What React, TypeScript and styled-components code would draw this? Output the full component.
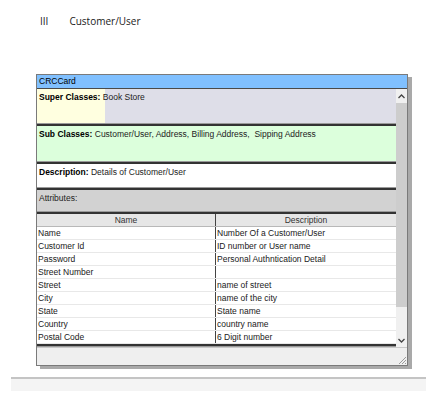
import React from "react";
import styled, { createGlobalStyle } from "styled-components";

const GlobalStyle = createGlobalStyle`
  html, body { margin: 0; padding: 0; background: #ffffff; }
  body { font-family: "Liberation Sans", Arial, sans-serif; }
`;

const Page = styled.div`
  width: 444px;
  height: 405px;
  padding-top: 14px;
  box-sizing: border-box;
`;

const Heading = styled.div`
  display: flex;
  align-items: center;
  gap: 21px;
  padding-left: 40px;
  height: 14px;
  font-family: "Open Sans", "Noto Sans", sans-serif;
  font-size: 10px;
  color: #1a1a1a;
`;

const Window = styled.div`
  margin: 46px 0 0 36px;
  width: 370px;
  border: 1px solid #7a7a7a;
  box-shadow: 4px 3px 0 #a9a9a9;
  background: #ffffff;
  font-size: 8.5px;
  color: #000;
`;

const TitleBar = styled.div`
  height: 13px;
  line-height: 13px;
  padding-left: 2px;
  background: #80c0ff;
  border-bottom: 1px solid #4a4a4a;
`;

const Body = styled.div`
  display: flex;
`;

const Content = styled.div`
  flex: 1;
  display: flex;
  flex-direction: column;
`;

const Section = styled.div<{ $h: number; $bg: string }>`
  height: ${(p) => p.$h}px;
  background: ${(p) => p.$bg};
  padding: 3px 2px 0;
  box-sizing: border-box;
  border-bottom: 2px solid #333;
  box-shadow: inset 0 -1px 0 #9a9a9a;
  color: #222;
`;

const Label = styled.b`
  font-weight: bold;
  color: #000;
`;

const HeaderRow = styled.div`
  display: grid;
  grid-template-columns: 179px 1fr;
  height: 12px;
  background: #e6e6e6;
  border-bottom: 1px solid #b8b8b8;
  color: #333;
`;

const HeaderCell = styled.div<{ $last?: boolean }>`
  text-align: center;
  line-height: 12px;
  border-right: ${(p) => (p.$last ? "none" : "1px solid #444")};
`;

const Row = styled.div`
  display: grid;
  grid-template-columns: 179px 1fr;
  height: 13px;
  border-bottom: 1px solid #e8e8e8;
  box-sizing: border-box;
`;

const Cell = styled.div<{ $last?: boolean }>`
  line-height: 12px;
  padding-left: 1px;
  white-space: nowrap;
  overflow: hidden;
  color: #1a1a1a;
  border-right: ${(p) => (p.$last ? "none" : "1px solid #444")};
`;

const TableEnd = styled.div`
  height: 2px;
  background: #333;
  border-bottom: 1px solid #999;
`;

const Scrollbar = styled.div`
  width: 11px;
  display: flex;
  flex-direction: column;
  background: #f0f0f0;
`;

const ArrowBtn = styled.div`
  height: 14px;
  display: flex;
  align-items: center;
  justify-content: center;
  background: #f0f0f0;
`;

const Thumb = styled.div`
  height: 204px;
  background: #cdcdcd;
`;

const Track = styled.div`
  flex: 1;
`;

const StatusBar = styled.div`
  height: 17px;
  background: #efefef;
  border-top: 1px solid #c8c8c8;
  display: flex;
  justify-content: flex-end;
  align-items: flex-end;
`;

const Divider = styled.div`
  margin: 11px 0 0 11px;
  width: 415px;
  height: 12px;
  border-top: 2px solid #c4c4c4;
  background: #f4f4f4;
`;

const rows: [string, string][] = [
  ["Name", "Number Of a Customer/User"],
  ["Customer Id", "ID number or User name"],
  ["Password", "Personal Authntication Detail"],
  ["Street Number", ""],
  ["Street", "name of street"],
  ["City", "name of the city"],
  ["State", "State name"],
  ["Country", "country name"],
  ["Postal Code", "6 Digit number"],
];

export default function App() {
  return (
    <Page>
      <GlobalStyle />
      <Heading>
        <span>III</span>
        <span>Customer/User</span>
      </Heading>
      <Window>
        <TitleBar>CRCCard</TitleBar>
        <Body>
          <Content>
            <Section $h={37} $bg="linear-gradient(to right, #ffffe0 68px, #dedee8 68px)">
              <Label>Super Classes:</Label> Book Store
            </Section>
            <Section $h={38} $bg="#dcffdc">
              <Label>Sub Classes:</Label> Customer/User, Address, Billing Address,&nbsp; Sipping Address
            </Section>
            <Section $h={26} $bg="#ffffff">
              <Label>Description:</Label> Details of Customer/User
            </Section>
            <Section $h={24} $bg="#d2d2d2">
              Attributes:
            </Section>
            <HeaderRow>
              <HeaderCell>Name</HeaderCell>
              <HeaderCell $last>Description</HeaderCell>
            </HeaderRow>
            {rows.map(([n, d]) => (
              <Row key={n}>
                <Cell>{n}</Cell>
                <Cell $last>{d}</Cell>
              </Row>
            ))}
            <TableEnd />
          </Content>
          <Scrollbar>
            <ArrowBtn>
              <svg width="7" height="5" viewBox="0 0 7 5">
                <path d="M0.5 4 L3.5 1 L6.5 4" fill="none" stroke="#444" strokeWidth="1.3" />
              </svg>
            </ArrowBtn>
            <Thumb />
            <Track />
            <ArrowBtn>
              <svg width="7" height="5" viewBox="0 0 7 5">
                <path d="M0.5 1 L3.5 4 L6.5 1" fill="none" stroke="#444" strokeWidth="1.3" />
              </svg>
            </ArrowBtn>
          </Scrollbar>
        </Body>
        <StatusBar>
          <svg width="10" height="10" viewBox="0 0 10 10">
            <path d="M9 2 L2 9 M9 5 L5 9 M9 8 L8 9" stroke="#9a9a9a" strokeWidth="1" />
          </svg>
        </StatusBar>
      </Window>
      <Divider />
    </Page>
  );
}
